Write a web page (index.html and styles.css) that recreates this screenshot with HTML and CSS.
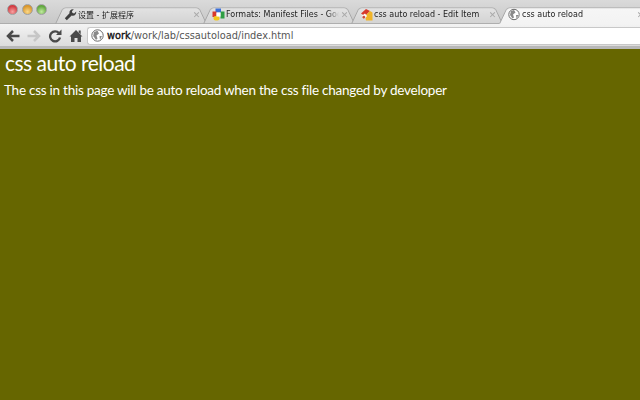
FILE: index.html
```html
<!DOCTYPE html>
<html lang="en">
<head>
<meta charset="utf-8">
<title>css auto reload</title>
<link rel="stylesheet" href="styles.css">
</head>
<body>
<header class="chrome">
  <div class="tabstrip">
    <div class="lights">
      <span class="light red"></span><span class="light amber"></span><span class="light green"></span>
    </div>
    <div class="tabs">
      <div class="tab">
        <svg class="fav" viewBox="0 0 13 13"><path d="M.8 10.300 5.500 5.300C5 3 6.800 .8 9.800 1.300L7.900 3.300 8.500 5 10.200 5.500 12.200 3.500C12.600 6.400 10.300 8.500 7.700 7.600L2.800 12.300Z" fill="#3f3f3f"/></svg>
        <span class="title">设置 - 扩展程序</span>
        <span class="close">✕</span>
      </div>
      <div class="tab">
        <svg class="fav" viewBox="0 0 13 13"><path d="M3.500 .5H9V4.500H3.500Z" fill="#3b6fd8"/><path d="M8.500 3.500H12.500V10.500H8.500Z" fill="#2f9e44"/><path d="M.5 3.500H4.500V9H.5Z" fill="#d8392b"/><rect x="1.500" y="8" width="6" height="4.500" rx="2" fill="#f2c81e"/><rect x="4.500" y="4.500" width="4" height="4" fill="#fff"/></svg>
        <span class="title fade">Formats: Manifest Files - Google Chrome</span>
        <span class="close">✕</span>
      </div>
      <div class="tab">
        <svg class="fav" viewBox="0 0 13 13"><path d="M1 5.500 6 1 10 3 5 8Z" fill="#d8392b"/><path d="M5 8 10 3 12.500 4.500 12.500 12.500 6 12.500Z" fill="#f0b429"/><path d="M1.500 8 5 5.500 7 8 4.500 11Z" fill="#fff"/><path d="M2 9 4 7.500 5.500 9 4 11Z" fill="#c9483a"/></svg>
        <span class="title">css auto reload - Edit Item</span>
        <span class="close">✕</span>
      </div>
      <div class="tab active">
        <svg class="fav" viewBox="0 0 13 13"><circle cx="6" cy="6.500" r="5.200" fill="#fff" stroke="#6a6a6a"/><path d="M3 3 6 2 7.500 4.500 5 6.500 6 9.500 4.500 10.500 2 7ZM8 7 10.500 7 8.500 10.500Z" fill="#8a8a8a"/></svg>
        <span class="title">css auto reload</span>
        <span class="close">✕</span>
      </div>
    </div>
  </div>
  <nav class="toolbar">
    <svg class="tool" viewBox="0 0 14 14"><path d="M13.500 7H2.500M7 2 2 7 7 12" fill="none" stroke="#4a4a4a" stroke-width="2.500"/></svg>
    <svg class="tool" viewBox="0 0 14 14"><path d="M.5 7H11.500M7 2 12 7 7 12" fill="none" stroke="#c6c6c6" stroke-width="2.500"/></svg>
    <svg class="tool" viewBox="0 0 14 14"><path d="M11 4.200A5 5 0 1 0 12 8.500" fill="none" stroke="#4a4a4a" stroke-width="2.300"/><path d="M8 6H13.500V.5Z" fill="#4a4a4a"/></svg>
    <svg class="tool" viewBox="0 0 14 14"><path d="M7 1 13.500 7.500H12V13H8.500V9H5.500V13H2V7.500H.5ZM9.700 1.500H11.700V5.200L9.700 3.300Z" fill="#4a4a4a"/></svg>
    <div class="omnibox">
      <svg class="fav" viewBox="0 0 13 13"><circle cx="6.500" cy="6.500" r="5.700" fill="#fff" stroke="#6a6a6a"/><path d="M3 3 6.500 1.800 8 4.500 5.500 6.500 6.500 9.500 5 11 2.200 7ZM8.500 7 11 7 9 11Z" fill="#8a8a8a"/></svg>
      <span class="url"><b>work</b>/work/lab/cssautoload/index.html</span>
    </div>
  </nav>
</header>
<main class="page">
  <h1>css auto reload</h1>
  <p>The css in this page will be auto reload when the css file changed by developer</p>
</main>
</body>
</html>
```
FILE: styles.css
```css
* { box-sizing: border-box; }
html, body { margin: 0; height: 100%; }
body {
  width: 640px;
  height: 400px;
  overflow: hidden;
  display: flex;
  flex-direction: column;
  background: #666600;
}
.chrome {
  flex: none;
  height: 49px;
  background: #c4c4c4;
  border-bottom: 3px solid #b8b8b8;
  font-family: "DejaVu Sans", "Noto Sans CJK SC", sans-serif;
}
.tabstrip {
  height: 24px;
  display: flex;
  align-items: flex-end;
  padding-left: 7px;
  border-bottom: 1px solid #adadad;
  background: linear-gradient(#dadada, #c8c8c8);
}
.lights { display: flex; gap: 3.500px; width: 50px; height: 21px; flex: none; }
.light { width: 11px; height: 11px; border-radius: 50%; border: 1px solid #a0a0a0; margin-top: 2px; }
.red { background: radial-gradient(circle at 50% 75%, #f7a3a3, #d2393f 70%); }
.amber { background: radial-gradient(circle at 50% 75%, #fbd98a, #d9962a 70%); }
.green { background: radial-gradient(circle at 50% 75%, #c2eba0, #5fa63c 70%); }
.tabs { display: flex; flex: none; height: 19px; margin-bottom: -1px; }
.tab {
  position: relative;
  width: 148px;
  flex: none;
  height: 19px;
  display: flex;
  align-items: center;
  gap: 1px;
  padding: 0 4px 0 7px;
  font-size: 8px;
  color: #222;
}
.tab::before {
  content: "";
  position: absolute;
  inset: 0 -2px 0 -2px;
  background: linear-gradient(#e2e2e2, #d4d4d4);
  border: 1px solid #a6a6a6;
  border-bottom-color: #adadad;
  border-radius: 4px 4px 0 0;
  transform: perspective(40px) rotateX(14deg);
  transform-origin: bottom;
}
.tab.active { z-index: 1; }
.tab.active::before {
  background: linear-gradient(#f6f6f6, #f3f3f3);
  border-bottom-color: #f3f3f3;
}
.fav { position: relative; width: 13px; height: 13px; flex: none; }
.title { position: relative; flex: 1; min-width: 0; white-space: nowrap; overflow: hidden; }
.fade {
  -webkit-mask-image: linear-gradient(90deg, #000 90%, transparent 100%);
  mask-image: linear-gradient(90deg, #000 90%, transparent 100%);
}
.close { position: relative; flex: none; width: 9px; color: #a8a8a8; font-size: 9px; font-weight: bold; text-align: center; }
.toolbar {
  height: 22px;
  display: flex;
  align-items: center;
  gap: 7px;
  padding: 1px 0 0 6px;
  background: linear-gradient(#f3f3f3, #dcdcdc);
}
.tool { width: 14px; height: 14px; flex: none; }
.omnibox {
  flex: 1;
  height: 18px;
  margin-left: -3px;
  display: flex;
  align-items: center;
  gap: 3px;
  padding-left: 3px;
  background: #fff;
  border: 1px solid #c8c8c8;
  border-right: 0;
  border-radius: 3px 0 0 3px;
}
.url { font-size: 9.800px; color: #555; }
.url b { color: #111; font-weight: 400; -webkit-text-stroke: .35px #111; }
.page {
  flex: 1;
  padding: 3px 4px 0;
  color: #fff;
  font-family: Lato, "Liberation Sans", sans-serif;
}
h1 { margin: 0 0 0 1px; font-size: 21px; font-weight: 400; line-height: 22px; letter-spacing: -.5px; }
p { margin: 8px 0 0; font-size: 13.500px; line-height: 16px; letter-spacing: -.25px; }
```
